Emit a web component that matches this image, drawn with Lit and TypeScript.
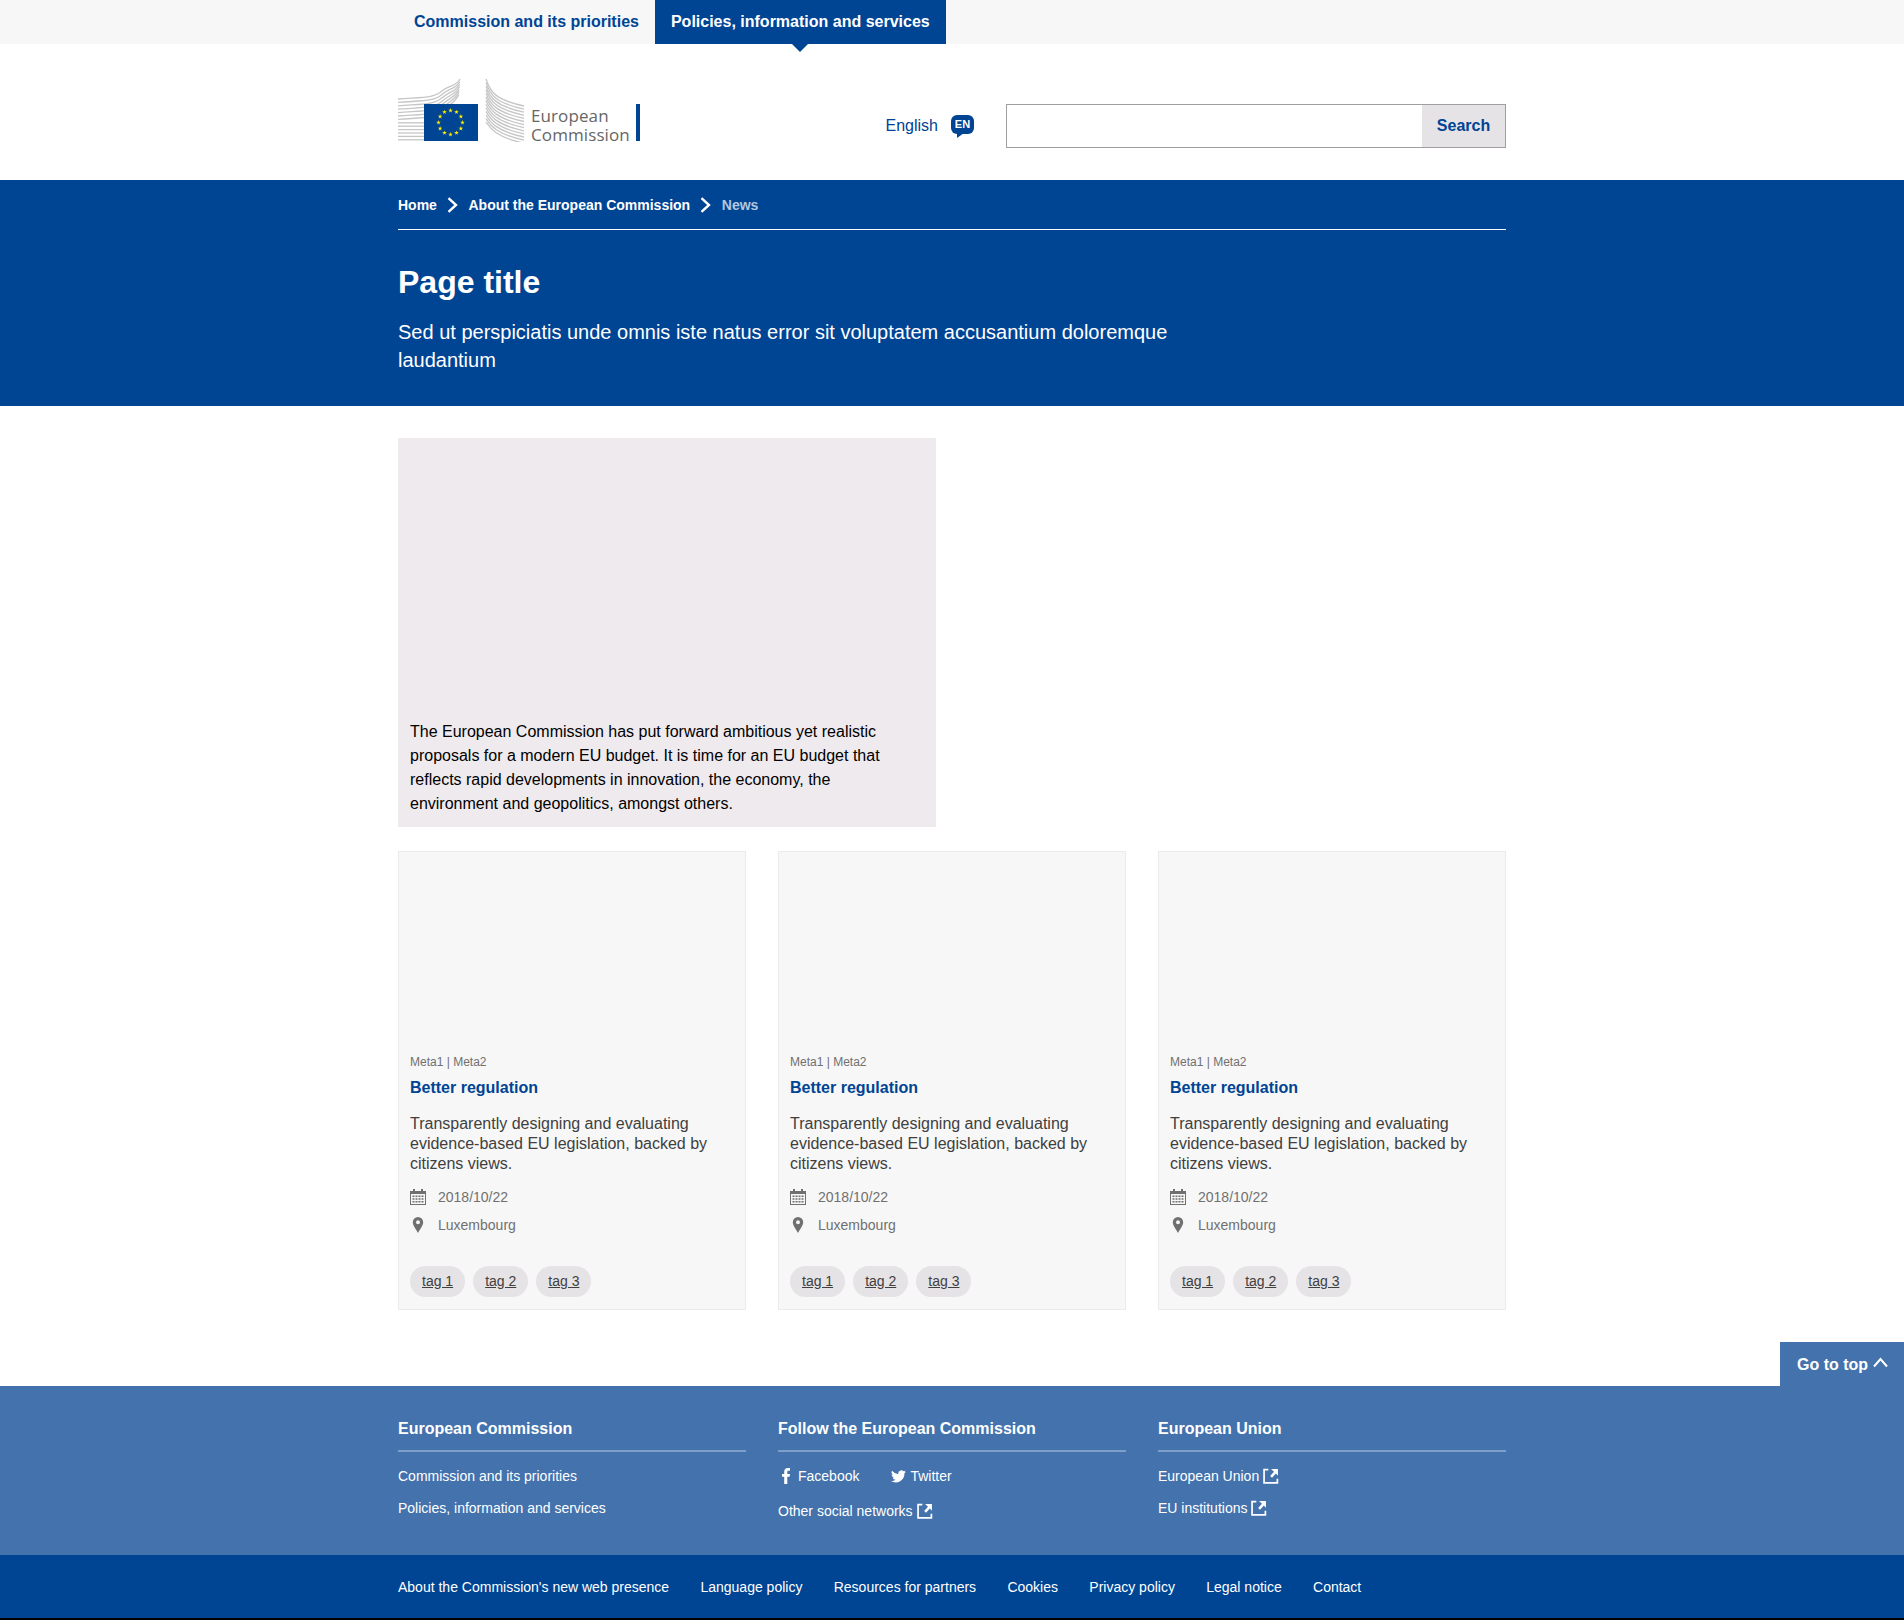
import { LitElement, html, css, svg } from 'lit';
import { customElement } from 'lit/decorators.js';

const externalIcon = html`<svg class="ext" width="16" height="16" viewBox="0 0 15 15" fill="none">
  <path d="M5 1.500H1v12.500h12.500V10" stroke="#fff" stroke-width="1.600" />
  <path d="M7.500 1h6.500v6.200l-2-2-3.500 4-1.800-1.800 3.600-3.900z" fill="#fff" />
</svg>`;

const chevron = html`<svg class="crumb-sep" width="11" height="16" viewBox="0 0 11 16" fill="none">
  <path d="M1.500 1.200L9 8l-7.500 6.800" stroke="#fff" stroke-width="2.400" />
</svg>`;

const calendarIcon = html`<svg width="16" height="16" viewBox="0 0 16 16">
  <path fill="#707070" d="M3 0h2v2h6V0h2v2h3v14H0V2h3zM1 5v10h14V5z" />
  <path fill="#707070" d="M2.500 6.500h2v1.500h-2zM5.500 6.500h2v1.500h-2zM8.500 6.500h2v1.500h-2zM11.500 6.500h2v1.500h-2zM2.500 9.200h2v1.500h-2zM5.500 9.200h2v1.500h-2zM8.500 9.200h2v1.500h-2zM11.500 9.200h2v1.500h-2zM2.500 11.900h2v1.500h-2zM5.500 11.900h2v1.500h-2zM8.500 11.900h2v1.500h-2zM11.500 11.900h2v1.500h-2z" />
</svg>`;

const pinIcon = html`<svg width="16" height="16" viewBox="0 0 16 16">
  <path fill="#707070" fill-rule="evenodd" d="M8 0a5.200 5.200 0 0 1 5.200 5.200c0 3.300-3.500 7.300-5.200 10.800C6.300 12.500 2.800 8.500 2.800 5.200A5.200 5.200 0 0 1 8 0zm0 3.200a2 2 0 1 0 0 4 2 2 0 0 0 0-4z" />
</svg>`;

function star(cx: number, cy: number, r: number) {
  const pts: string[] = [];
  for (let i = 0; i < 10; i++) {
    const rad = i % 2 === 0 ? r : r * 0.4;
    const a = (Math.PI / 5) * i - Math.PI / 2;
    pts.push(`${(cx + rad * Math.cos(a)).toFixed(2)},${(cy + rad * Math.sin(a)).toFixed(2)}`);
  }
  return svg`<polygon points=${pts.join(' ')} fill="#ffed00" />`;
}

function logoMark() {
  const leftLines = [];
  const rightLines = [];
  for (let i = 0; i < 13; i++) {
    const y = 21 + i * 3.4;
    const topX = 62 - i * 0.2;
    const topY = 1 + i * 2.6;
    if (i < 7) {
      leftLines.push(svg`<path d="M0 ${y}C26 ${y - 2} 36 ${y - 1} 44 ${y - 8}S${topX - 4} ${topY + 8} ${topX} ${topY}" />`);
    } else {
      leftLines.push(svg`<path d="M0 ${y}H26" />`);
    }
    const ry = 24 + i * 3.1;
    rightLines.push(svg`<path d="M88 ${1 + i * 3.6}C92 ${14 + i * 3} 98 ${ry - 2} 126 ${ry + 4}" />`);
  }
  const stars = [];
  for (let i = 0; i < 12; i++) {
    const a = (Math.PI / 6) * i;
    stars.push(star(52.5 + 12 * Math.sin(a), 44.5 - 12 * Math.cos(a), 2.4));
  }
  return html`<svg width="127" height="64" viewBox="0 0 127 64" aria-hidden="true">
    <g fill="none" stroke="#c6c6c6" stroke-width="1.300">${leftLines}${rightLines}</g>
    <rect x="26" y="26" width="54" height="37" fill="#004494" />
    ${stars}
  </svg>`;
}

@customElement('card-item')
class CardItem extends LitElement {
  static styles = css`
    :host {
      display: flex;
      flex-direction: column;
      justify-content: flex-end;
      height: 459px;
      box-sizing: border-box;
      padding: 0 11px 12px;
      background: #f7f7f7;
      border: 1px solid #ebebeb;
    }
    .meta {
      font-size: 12px;
      line-height: 16px;
      color: #707070;
    }
    .title {
      margin-top: 6px;
      font-size: 16px;
      line-height: 24px;
      font-weight: 700;
      color: #004494;
    }
    .body {
      margin-top: 14px;
      font-size: 16px;
      line-height: 20px;
      color: #404040;
    }
    .info {
      display: flex;
      align-items: center;
      gap: 12px;
      height: 28px;
      font-size: 14px;
      color: #707070;
    }
    .info.first {
      margin-top: 9px;
    }
    .tags {
      display: flex;
      gap: 8px;
      margin-top: 27px;
    }
    .tags a {
      display: block;
      padding: 0 12px;
      height: 31px;
      line-height: 31px;
      border-radius: 16px;
      background: #e6e3e6;
      font-size: 14px;
      color: #404040;
      text-decoration: underline;
    }
  `;

  render() {
    return html`
      <div class="meta">Meta1 | Meta2</div>
      <div class="title">Better regulation</div>
      <div class="body">Transparently designing and evaluating evidence-based EU legislation, backed by citizens views.</div>
      <div class="info first">${calendarIcon}<span>2018/10/22</span></div>
      <div class="info">${pinIcon}<span>Luxembourg</span></div>
      <div class="tags">
        <a>tag 1</a>
        <a>tag 2</a>
        <a>tag 3</a>
      </div>
    `;
  }
}

@customElement('app-root')
class AppRoot extends LitElement {
  static styles = css`
    :host {
      display: block;
      font-family: 'Liberation Sans', Arial, sans-serif;
      color: #404040;
      background: #fff;
    }
    .wrap {
      width: 1108px;
      margin: 0 auto;
    }
    .topbar {
      background: #f7f7f7;
      height: 44px;
    }
    .tabs {
      display: flex;
    }
    .tab {
      position: relative;
      padding: 0 16px;
      line-height: 43px;
      height: 44px;
      font-size: 16px;
      font-weight: 700;
      color: #004494;
    }
    .tab.active {
      background: #004494;
      color: #fff;
    }
    .tab.active::after {
      content: '';
      position: absolute;
      left: 50%;
      top: 44px;
      margin-left: -8px;
      border: 8px solid transparent;
      border-top-color: #004494;
      border-bottom: 0;
    }
    .header {
      display: flex;
      align-items: center;
      box-sizing: border-box;
      height: 136px;
      padding-top: 28px;
    }
    .logo {
      display: flex;
      align-items: flex-end;
      margin-top: -32px;
    }
    .logo-text {
      margin: 0 0 -2px 6px;
      padding-right: 6px;
      font-family: 'Open Sans', sans-serif;
      font-size: 17px;
      line-height: 19px;
      color: #666;
      letter-spacing: 0.1px;
    }
    .logo-bar {
      width: 4px;
      height: 37px;
      margin-bottom: 1px;
      background: #004494;
    }
    .lang {
      display: flex;
      align-items: center;
      gap: 13px;
      margin-left: auto;
      font-size: 16px;
      color: #004494;
    }
    .en-badge {
      position: relative;
      display: block;
      width: 23px;
      height: 19px;
      margin-bottom: 3px;
      border-radius: 6px;
      background: #004494;
      color: #fff;
      font-size: 11px;
      font-weight: 700;
      line-height: 19px;
      text-align: center;
    }
    .en-badge::after {
      content: '';
      position: absolute;
      left: 6px;
      top: 18px;
      border-top: 5px solid #004494;
      border-right: 7px solid transparent;
    }
    .search {
      display: flex;
      box-sizing: border-box;
      width: 500px;
      height: 44px;
      margin-left: 32px;
      border: 1px solid #9f9f9f;
    }
    .search .field {
      flex: 1;
    }
    .search .btn {
      width: 83px;
      box-sizing: border-box;
      line-height: 42px;
      background: #e6e3e6;
      color: #004494;
      font-size: 16px;
      font-weight: 700;
      text-align: center;
    }
    .hero {
      background: #004494;
      color: #fff;
      height: 226px;
    }
    .crumbs {
      display: flex;
      align-items: center;
      height: 49px;
      border-bottom: 1px solid #fff;
      font-size: 14px;
      font-weight: 700;
    }
    .crumb-sep {
      margin: 0 10.3px;
    }
    .crumbs .here {
      color: #b3c7df;
    }
    h1 {
      margin: 30px 0 0;
      font-size: 32px;
      line-height: 44px;
      font-weight: 700;
    }
    .lead {
      margin: 14px 0 0;
      max-width: 780px;
      font-size: 20px;
      line-height: 28px;
    }
    .main {
      padding: 32px 0 76px;
    }
    .feature {
      display: flex;
      align-items: flex-end;
      box-sizing: border-box;
      width: 538px;
      height: 389px;
      padding: 12px 40px 11px 12px;
      background: #efeaee;
      color: #000;
      font-size: 16px;
      line-height: 24px;
    }
    .cards {
      display: grid;
      grid-template-columns: repeat(3, 1fr);
      gap: 32px;
      margin-top: 24px;
    }
    .footer {
      position: relative;
      background: #4372ad;
      color: #fff;
      height: 169px;
    }
    .go-top {
      position: absolute;
      right: 0;
      top: -44px;
      display: flex;
      gap: 5px;
      box-sizing: border-box;
      width: 124px;
      height: 44px;
      padding-left: 17px;
      background: #4372ad;
      font-size: 16px;
      font-weight: 700;
      line-height: 46px;
    }
    .go-top svg {
      margin-top: 15px;
    }
    .cols {
      display: grid;
      grid-template-columns: repeat(3, 1fr);
      gap: 32px;
      padding-top: 31px;
    }
    .col h2 {
      margin: 0 0 12px;
      padding-bottom: 9px;
      border-bottom: 2px solid #7f9fcb;
      font-size: 16px;
      line-height: 24px;
      font-weight: 700;
    }
    .col .row {
      display: flex;
      align-items: center;
      height: 24px;
      margin-bottom: 8px;
      font-size: 14px;
    }
    .ext {
      margin-left: 4px;
    }
    .social {
      display: inline-flex;
      align-items: center;
      gap: 4px;
      margin-right: 32px;
    }
    .social.fb {
      gap: 8px;
      padding-left: 4px;
    }
    .row.net {
      margin-top: 11px;
    }
    .bottom {
      background: #004494;
      height: 63px;
      border-bottom: 2px solid #000;
    }
    .bottom .wrap {
      display: flex;
      gap: 31.3px;
      color: #fff;
      font-size: 14px;
      line-height: 64px;
    }
  `;

  render() {
    return html`
      <div class="topbar">
        <div class="wrap tabs">
          <div class="tab">Commission and its priorities</div>
          <div class="tab active">Policies, information and services</div>
        </div>
      </div>
      <div class="wrap header">
        <div class="logo">
          ${logoMark()}
          <div class="logo-text">European<br />Commission</div>
          <div class="logo-bar"></div>
        </div>
        <div class="lang">English <span class="en-badge">EN</span></div>
        <div class="search">
          <div class="field"></div>
          <div class="btn">Search</div>
        </div>
      </div>
      <div class="hero">
        <div class="wrap">
          <div class="crumbs">
            <span>Home</span>${chevron}<span>About the European Commission</span>${chevron}<span class="here">News</span>
          </div>
          <h1>Page title</h1>
          <p class="lead">Sed ut perspiciatis unde omnis iste natus error sit voluptatem accusantium doloremque laudantium</p>
        </div>
      </div>
      <div class="wrap main">
        <div class="feature">
          <div>The European Commission has put forward ambitious yet realistic proposals for a modern EU budget. It is time for an EU budget that reflects rapid developments in innovation, the economy, the environment and geopolitics, amongst others.</div>
        </div>
        <div class="cards">
          <card-item></card-item>
          <card-item></card-item>
          <card-item></card-item>
        </div>
      </div>
      <div class="footer">
        <div class="go-top">
          Go to top
          <svg width="15" height="11" viewBox="0 0 15 11" fill="none"><path d="M1 9.500L7.500 2 14 9.500" stroke="#fff" stroke-width="2" /></svg>
        </div>
        <div class="wrap cols">
          <div class="col">
            <h2>European Commission</h2>
            <div class="row">Commission and its priorities</div>
            <div class="row">Policies, information and services</div>
          </div>
          <div class="col">
            <h2>Follow the European Commission</h2>
            <div class="row">
              <span class="social fb">
                <svg width="8" height="16" viewBox="0 0 8 16"><path fill="#fff" d="M2.200 16V8.700H0V6h2.200V4C2.200 1.500 3.500 0 6 0h2v2.700H6.600c-1 0-1.300.5-1.300 1.400V6H8l-.4 2.700H5.300V16z" /></svg>
                Facebook
              </span>
              <span class="social">
                <svg width="15" height="13" viewBox="0 0 24 20"><path fill="#fff" d="M24 2.400a9.800 9.800 0 0 1-2.800.8A5 5 0 0 0 23.300.5a9.900 9.900 0 0 1-3.100 1.200 4.900 4.900 0 0 0-8.400 4.500A14 14 0 0 1 1.700.9a4.900 4.900 0 0 0 1.500 6.600 4.900 4.900 0 0 1-2.200-.6c0 2.400 1.700 4.400 3.900 4.900a4.900 4.900 0 0 1-2.200.1 4.900 4.900 0 0 0 4.600 3.400A9.900 9.900 0 0 1 0 17.300 14 14 0 0 0 21.500 4.900c1-.7 1.800-1.500 2.500-2.500z" /></svg>
                Twitter
              </span>
            </div>
            <div class="row net">Other social networks${externalIcon}</div>
          </div>
          <div class="col">
            <h2>European Union</h2>
            <div class="row">European Union${externalIcon}</div>
            <div class="row">EU institutions${externalIcon}</div>
          </div>
        </div>
      </div>
      <div class="bottom">
        <div class="wrap">
          <span>About the Commission's new web presence</span>
          <span>Language policy</span>
          <span>Resources for partners</span>
          <span>Cookies</span>
          <span>Privacy policy</span>
          <span>Legal notice</span>
          <span>Contact</span>
        </div>
      </div>
    `;
  }
}
